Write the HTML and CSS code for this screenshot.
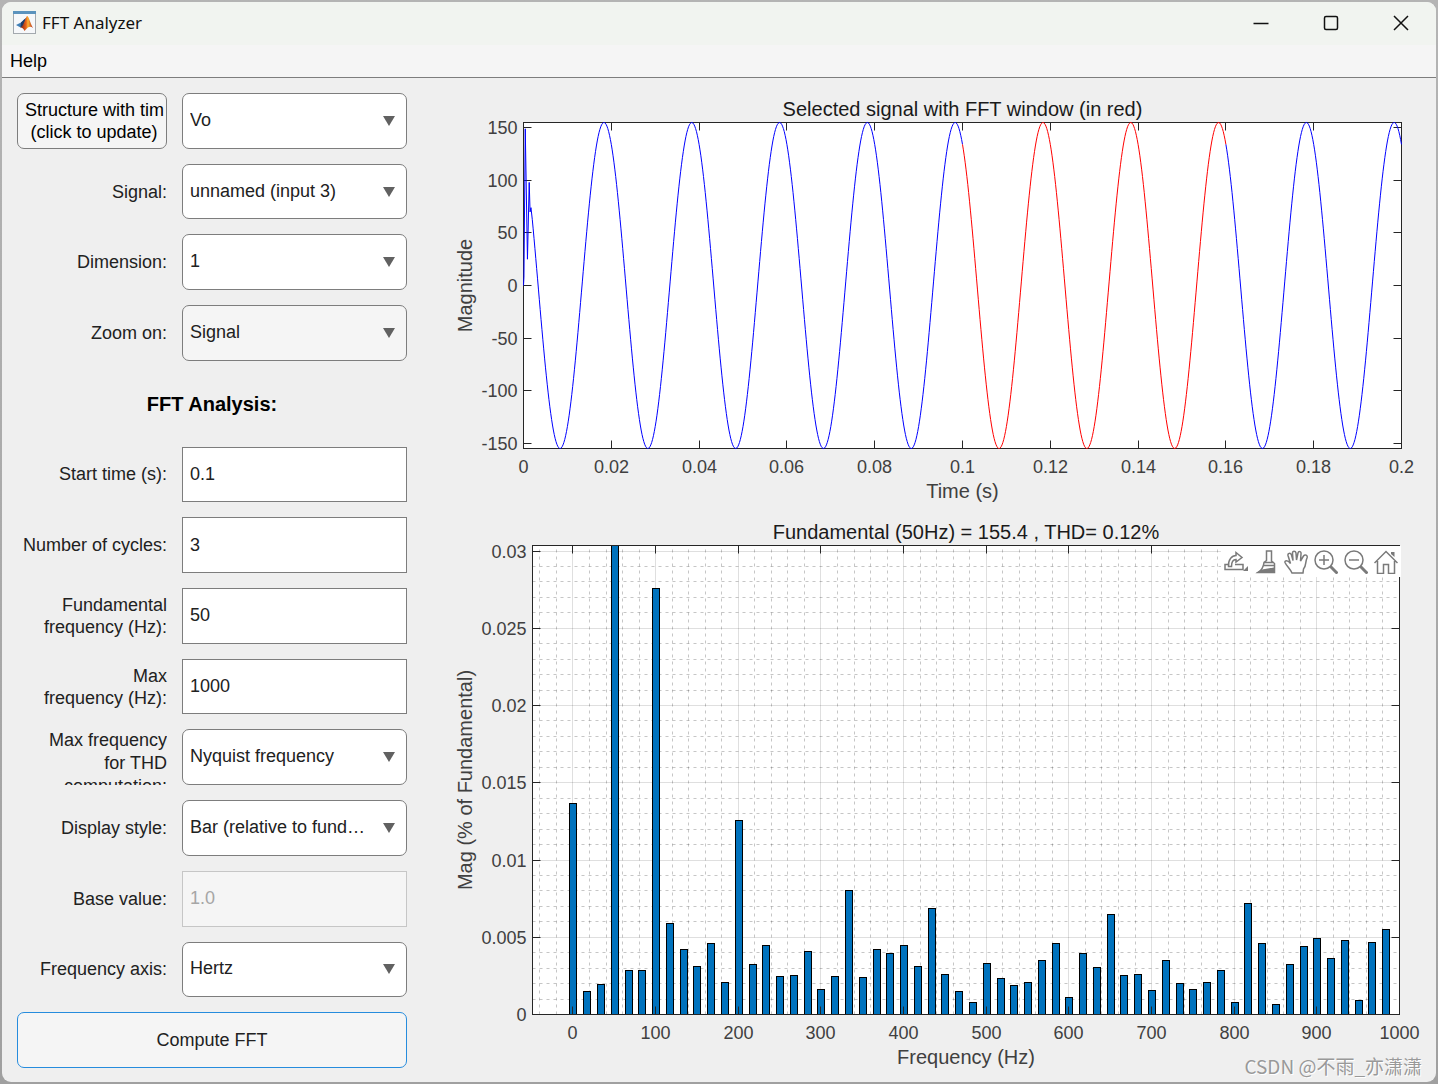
FILE: index.html
```html
<!DOCTYPE html>
<html lang="en">
<head>
  <meta charset="UTF-8">
  <title>FFT Analyzer</title>
  <link rel="stylesheet" href="styles.css">
</head>
<body>
  <div class="window">
    <header class="titlebar">
      <svg class="app-icon" width="24" height="24" viewBox="0 0 24 24">
        <defs>
          <linearGradient id="flame" x1="0" x2="1">
            <stop offset="0" stop-color="#7a1d12"/>
            <stop offset="0.45" stop-color="#e8641b"/>
            <stop offset="0.6" stop-color="#f9b233"/>
            <stop offset="1" stop-color="#b3261a"/>
          </linearGradient>
        </defs>
        <rect x="0.5" y="0.5" width="22" height="22" fill="#f6f8fa" stroke="#a3a9ae"/>
        <rect x="0" y="0" width="23" height="3" fill="#5b93bd"/>
        <path d="M3 14 L8 11.500 L11 8.500 L13 7 L10 15 L7.500 16.500 Z" fill="#3f7fb5"/>
        <path d="M8 11.500 L13 7 L10.500 15.500 L7.500 16.500 Z" fill="#1f3c66"/>
        <path d="M7.500 16.500 C10.500 15.500 12 8 14 5 C16 5 17 12 20 17 C17 14.500 15 16 11.500 20 C10.500 18 9.500 16.500 7.500 16.500 Z" fill="url(#flame)"/>
      </svg>
      <h1 class="title">FFT Analyzer</h1>
      <div class="window-buttons">
        <button type="button" aria-label="Minimize">
          <svg width="16" height="16" viewBox="0 0 16 16"><path d="M0.500 8.500 H15.500"/></svg>
        </button>
        <button type="button" aria-label="Maximize">
          <svg width="16" height="16" viewBox="0 0 16 16"><rect x="1.500" y="1.500" width="13" height="13" rx="1.500"/></svg>
        </button>
        <button type="button" aria-label="Close">
          <svg width="16" height="16" viewBox="0 0 16 16"><path d="M1 1 L15 15 M15 1 L1 15"/></svg>
        </button>
      </div>
    </header>

    <nav class="menubar"><a href="#">Help</a></nav>

    <main class="content">
      <form class="settings" id="settings">
        <button type="button" class="update-btn" id="update">Structure with tim<br>(click to update)</button>
        <div class="select"><select aria-labelledby="update"><option>Vo</option></select></div>

        <label for="signal">Signal:</label>
        <div class="select"><select id="signal"><option>unnamed (input 3)</option></select></div>

        <label for="dimension">Dimension:</label>
        <div class="select"><select id="dimension"><option>1</option></select></div>

        <label for="zoom">Zoom on:</label>
        <div class="select plain"><select id="zoom"><option>Signal</option></select></div>

        <h2>FFT Analysis:</h2>

        <label for="start">Start time (s):</label>
        <input type="text" id="start" value="0.1">

        <label for="cycles">Number of cycles:</label>
        <input type="text" id="cycles" value="3">

        <label for="fundamental">Fundamental frequency (Hz):</label>
        <input type="text" id="fundamental" value="50">

        <label for="maxfreq">Max<br>frequency (Hz):</label>
        <input type="text" id="maxfreq" value="1000">

        <label for="thd" class="clipped">Max frequency<br>for THD<br>computation:</label>
        <div class="select"><select id="thd"><option>Nyquist frequency</option></select></div>

        <label for="display">Display style:</label>
        <div class="select"><select id="display"><option>Bar (relative to fundamental)</option></select></div>

        <label for="base">Base value:</label>
        <input type="text" id="base" value="1.0" disabled>

        <label for="axis">Frequency axis:</label>
        <div class="select"><select id="axis"><option>Hertz</option></select></div>

        <button type="submit" class="compute-btn">Compute FFT</button>
      </form>

      <section class="plots">
        <div class="plot"><svg id="signalPlot"></svg></div>
        <div class="plot">
          <svg id="fftPlot"></svg>
          <div class="plot-tools">
            <button type="button" aria-label="Export">
              <svg viewBox="0 0 24 24"><path d="M5 14.500 H1 V19.500 H19 V14.500 H11"/><path d="M4.500 16.500 C4 9.500 8 5.500 12 5.500 V2.500 L18 7.500 L12 12 V9.500 C9.500 9.500 7.500 11.500 7.500 16.500 Z"/><path class="solid" d="M24 16 V21 H19 Z"/></svg>
            </button>
            <button type="button" aria-label="Brush">
              <svg viewBox="0 0 24 24"><path d="M12.500 1 H17.500 V11 L20.500 13.500 V22.500 H4 C8 20 9.500 17 10 12.500 L12.500 10.500 Z M10 12.500 H20 M9.500 15.500 H20.500"/><path class="solid" d="M8 19.500 L20 17.500 V23 H2 Z"/></svg>
            </button>
            <button type="button" aria-label="Pan">
              <svg viewBox="0 0 24 24"><path d="M8 23 C6.500 19 2.500 16 1 12.500 C0.500 10.500 3.500 9.500 6.500 13.500 L4 5.500 C3.500 3 6.500 2.500 7.500 5 L9 10.500 L8.500 3 C8.500 0.500 11.500 0.500 12 3 L12.500 10 L14 3 C14.500 1 17.500 1 17 4 L16.500 11 L19.500 6 C21 4 24 5 23 8 C21 12 22.500 16 19.500 19 L19 23 Z"/></svg>
            </button>
            <button type="button" aria-label="Zoom in">
              <svg viewBox="0 0 24 24"><circle cx="10" cy="10" r="9"/><path d="M5 10 H15 M10 5 V15"/><path class="thick" d="M16.500 16.500 L23.500 23.500"/></svg>
            </button>
            <button type="button" aria-label="Zoom out">
              <svg viewBox="0 0 24 24"><circle cx="10" cy="10" r="9"/><path d="M5 10 H15"/><path class="thick" d="M16.500 16.500 L23.500 23.500"/></svg>
            </button>
            <button type="button" aria-label="Restore view">
              <svg viewBox="0 0 24 24"><path d="M0.500 13 L12 1.500 L23.500 13 M3.500 11 V23.500 H9.500 V14.500 H14.500 V23.500 H20.500 V11"/><path class="solid" d="M17 2 H20.500 V7 L17 4 Z"/></svg>
            </button>
          </div>
        </div>
      </section>
    </main>

    <p class="watermark">CSDN @不雨_亦潇潇</p>
  </div>
  <script src="plots.js"></script>
</body>
</html>
```
FILE: styles.css
```css
* {
  box-sizing: border-box;
}

body {
  margin: 0;
  height: 100vh;
  padding: 2px;
  display: flex;
  background: linear-gradient(#b4b4b4, #a0a0a0);
  font-family: "Liberation Sans", Arial, sans-serif;
  font-size: 18px;
  line-height: 22px;
  color: #212121;
}

button, input, select {
  font: inherit;
  color: inherit;
}

.window {
  position: relative;
  flex: 1;
  min-width: 0;
  display: flex;
  flex-direction: column;
  background: #efefef;
  border-radius: 9px;
  overflow: hidden;
}

/* title bar */
.titlebar {
  display: flex;
  align-items: center;
  height: 43px;
  padding: 0 0 2px 11px;
  background: #f1f4f0;
}

.title {
  margin: 0 auto 0 5px;
  font-family: "Noto Sans", sans-serif;
  font-size: 17px;
  font-weight: normal;
  color: #111;
}

.window-buttons {
  display: flex;
}

.window-buttons button {
  width: 70px;
  height: 41px;
  padding: 0;
  border: none;
  background: none;
}

.window-buttons svg {
  display: block;
  margin: auto;
  fill: none;
  stroke: #111;
  stroke-width: 1.5;
}

.menubar {
  height: 33px;
  padding: 5px 8px;
  background: #f5f5f5;
  border-bottom: 1px solid #7d7d7d;
}

.menubar a {
  color: #000;
  text-decoration: none;
}

.content {
  flex: 1;
  min-height: 0;
  display: flex;
  gap: 15px;
  padding: 15px 15px 14px;
}

/* left panel */
.settings {
  display: grid;
  grid-template-columns: 150px 225px;
  grid-template-rows: repeat(14, minmax(0, 1fr));
  gap: 15px;
}

.settings label {
  align-self: center;
  text-align: right;
}

.settings .clipped {
  align-self: stretch;
  line-height: 23px;
  overflow: hidden;
}

.settings h2 {
  grid-column: 1 / -1;
  align-self: center;
  margin: 0;
  text-align: center;
  font-size: 20px;
  color: #000;
}

.settings input,
.settings select {
  width: 100%;
  height: 100%;
  padding: 0 7px;
  border: 1px solid #7d7d7d;
  background: #fff;
}

.settings input:disabled {
  border-color: #c6c6c6;
  background: #f5f5f5;
  color: #a6a6a6;
}

.select {
  position: relative;
}

.settings select {
  appearance: none;
  padding: 0 38px 2px 7px;
  border-radius: 7px;
  text-overflow: ellipsis;
}

.settings .plain select {
  background: #f5f5f5;
}

.select::after {
  content: "";
  position: absolute;
  right: 12px;
  top: calc(50% - 5px);
  border: 6px solid transparent;
  border-top: 10px solid #616161;
  border-bottom: none;
  pointer-events: none;
}

.update-btn,
.compute-btn {
  border: 1px solid #7d7d7d;
  border-radius: 7px;
  background: #f5f5f5;
}

.update-btn {
  padding: 0 3px 0 7px;
  color: #000;
  white-space: nowrap;
  overflow: hidden;
}

.compute-btn {
  grid-column: 1 / -1;
  border-color: #268cdd;
}

/* plots */
.plots {
  flex: 1;
  min-width: 0;
  display: grid;
  grid-template-rows: 424fr 551fr;
}

.plot {
  position: relative;
  min-height: 0;
}

.plot > svg {
  display: block;
  width: 100%;
  height: 100%;
}

.plot text {
  font-size: 18px;
  fill: #404040;
}

.plot .axis-label,
.plot .plot-title {
  font-size: 20px;
  text-anchor: middle;
}

.plot .plot-title {
  fill: #1a1a1a;
}

.area { fill: #fff; }
.frame { fill: none; stroke: #262626; }
.major { stroke: #262626; stroke-opacity: 0.15; }
.minor { stroke: #1a1a1a; stroke-opacity: 0.25; stroke-dasharray: 3 4; }
.tick { stroke: #262626; }
.bar { fill: #0072bd; stroke: #000; }
.line { fill: none; stroke: #00f; }
.line.selected { stroke: #f00; }

.plot-tools {
  position: absolute;
  top: 29px;
  right: 20px;
  display: flex;
  background: #fff;
}

.plot-tools button {
  width: 30px;
  height: 31px;
  padding: 3px;
  border: none;
  background: none;
}

.plot-tools svg {
  display: block;
  width: 24px;
  height: 24px;
  fill: none;
  stroke: #7a7a7a;
  stroke-width: 1.5;
}

.plot-tools .thick {
  stroke-width: 3;
}

.plot-tools .solid {
  fill: #7a7a7a;
  stroke: none;
}

.watermark {
  position: absolute;
  right: 14px;
  bottom: 5px;
  margin: 0;
  font-family: "Noto Sans CJK SC", sans-serif;
  font-size: 19px;
  color: #999;
  text-shadow: 1px 1px 0 #fff;
}
```
FILE: plots.js
```js
const NS = 'http://www.w3.org/2000/svg';

// one value per 16.67 Hz, in % of the fundamental
const spectrum = [
  0.01369, 0.00151, 0.00196, 100, 0.00287, 0.00287, 0.0276, 0.00591, 0.00423, 0.00313,
  0.00462, 0.00209, 0.01256, 0.00326, 0.00449, 0.00248, 0.00255, 0.0041, 0.00164, 0.00248,
  0.00805, 0.00242, 0.00423, 0.00397, 0.00449, 0.00313, 0.00688, 0.00261, 0.00151, 0.0008,
  0.00332, 0.00235, 0.0019, 0.00209, 0.00352, 0.00462, 0.00112, 0.00397, 0.00306, 0.00649,
  0.00255, 0.00261, 0.00157, 0.00352, 0.00203, 0.00164, 0.00209, 0.00287, 0.0008, 0.0072,
  0.00462, 0.00067, 0.00326, 0.00442, 0.00494, 0.00365, 0.00481, 0.00093, 0.00468, 0.00552
];

// start-up transient: [time, value]
const transient = [[0, 0], [0.0001, 8], [0.0004, 149], [0.0009, 25], [0.0013, 98], [0.0015, 70], [0.0017, 74]];

function add(svg, name, attrs, text) {
  const el = document.createElementNS(NS, name);
  for (const key in attrs) el.setAttribute(key, attrs[key]);
  if (text !== undefined) el.textContent = text;
  svg.appendChild(el);
  return el;
}

function line(svg, cls, x1, y1, x2, y2) {
  add(svg, 'line', { class: cls, x1, y1, x2, y2 });
}

const crisp = (v) => Math.floor(v) + 0.5;

function makeAxes(svg, opt) {
  svg.innerHTML = '';
  const left = opt.left + 0.5;
  const top = opt.top + 0.5;
  const right = crisp(svg.clientWidth - opt.right);
  const bottom = crisp(svg.clientHeight - opt.bottom);
  const x = (v) => left + (v - opt.xlim[0]) / (opt.xlim[1] - opt.xlim[0]) * (right - left);
  const y = (v) => bottom - (v - opt.ylim[0]) / (opt.ylim[1] - opt.ylim[0]) * (bottom - top);
  add(svg, 'rect', { class: 'area', x: left, y: top, width: right - left, height: bottom - top });
  return { svg, left, top, right, bottom, x, y };
}

function finishAxes(a, opt) {
  const { svg, left, top, right, bottom } = a;
  add(svg, 'rect', { class: 'frame', x: left, y: top, width: right - left, height: bottom - top });
  opt.xticks.forEach((v) => {
    const px = crisp(a.x(v));
    line(svg, 'tick', px, bottom, px, bottom - 8);
    line(svg, 'tick', px, top, px, top + 8);
    add(svg, 'text', { x: px, y: bottom + 24, 'text-anchor': 'middle' }, v);
  });
  opt.yticks.forEach((v) => {
    const py = crisp(a.y(v));
    line(svg, 'tick', left, py, left + 8, py);
    line(svg, 'tick', right, py, right - 8, py);
    add(svg, 'text', { x: left - 6, y: py + 6, 'text-anchor': 'end' }, v);
  });
  const cx = (left + right) / 2;
  const cy = (top + bottom) / 2;
  add(svg, 'text', { class: 'plot-title', x: cx, y: top - 7 }, opt.title);
  add(svg, 'text', { class: 'axis-label', x: cx, y: bottom + 49 }, opt.xlabel);
  add(svg, 'text', { class: 'axis-label', x: 50, y: cy, transform: `rotate(-90 50 ${cy})` }, opt.ylabel);
}

function drawSignal() {
  const opt = {
    left: 101, right: 20, top: 29, bottom: 69,
    xlim: [0, 0.2], ylim: [-155, 155],
    xticks: [0, 0.02, 0.04, 0.06, 0.08, 0.1, 0.12, 0.14, 0.16, 0.18, 0.2],
    yticks: [-150, -100, -50, 0, 50, 100, 150],
    title: 'Selected signal with FFT window (in red)',
    xlabel: 'Time (s)', ylabel: 'Magnitude'
  };
  const a = makeAxes(document.getElementById('signalPlot'), opt);
  finishAxes(a, opt);

  const wave = (from, to) => {
    const pts = [];
    for (let i = Math.round(from * 5000); i <= Math.round(to * 5000); i++) {
      const t = i / 5000;
      pts.push([t, 155 * Math.cos(2 * Math.PI * 50 * (t - 0.01833))]);
    }
    return pts;
  };
  const plot = (pts, cls) => add(a.svg, 'polyline', {
    class: cls,
    points: pts.map((p) => `${a.x(p[0]).toFixed(2)},${a.y(p[1]).toFixed(2)}`).join(' ')
  });
  plot(transient.concat(wave(0.002, 0.1)), 'line');
  plot(wave(0.1, 0.16), 'line selected');
  plot(wave(0.16, 0.2), 'line');
}

function drawSpectrum() {
  const opt = {
    left: 110, right: 22, top: 28, bottom: 54,
    xlim: [-49, 1000], ylim: [0, 0.03036],
    xticks: [0, 100, 200, 300, 400, 500, 600, 700, 800, 900, 1000],
    yticks: [0, 0.005, 0.01, 0.015, 0.02, 0.025, 0.03],
    title: 'Fundamental (50Hz) = 155.4 , THD= 0.12%',
    xlabel: 'Frequency (Hz)', ylabel: 'Mag (% of Fundamental)'
  };
  const a = makeAxes(document.getElementById('fftPlot'), opt);

  for (let f = -40; f < 1000; f += 20) {
    const px = crisp(a.x(f));
    line(a.svg, f % 100 ? 'minor' : 'major', px, a.bottom, px, a.top);
  }
  for (let i = 1; i <= 30; i++) {
    const py = crisp(a.y(i / 1000));
    line(a.svg, i % 5 ? 'minor' : 'major', a.left, py, a.right, py);
  }
  spectrum.forEach((v, i) => {
    const px = crisp(a.x(i * 50 / 3) - 3);
    const py = Math.max(a.top, crisp(a.y(v)));
    add(a.svg, 'rect', { class: 'bar', x: px, y: py, width: 7, height: a.bottom - py });
  });
  finishAxes(a, opt);
}

function draw() {
  drawSignal();
  drawSpectrum();
}

window.addEventListener('resize', draw);
document.getElementById('settings').addEventListener('submit', (e) => {
  e.preventDefault();
  draw();
});
draw();
```
